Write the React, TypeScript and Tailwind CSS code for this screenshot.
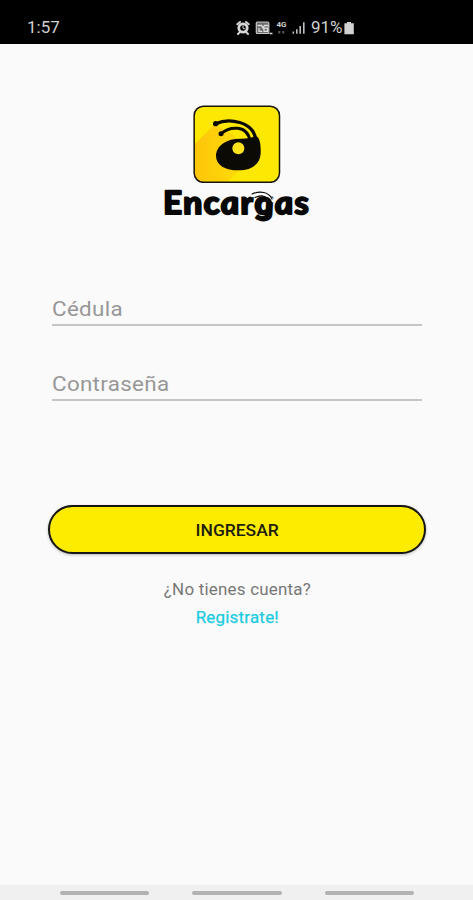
import React from 'react';

const StatusIcons = () => (
  <svg className="h-[18px] w-[70px]" viewBox="0 0 70 18" fill="none">
    {/* alarm */}
    <g stroke="#d6d6d6" strokeWidth="2" strokeLinecap="round">
      <circle cx="7" cy="9" r="4.2" strokeWidth="2.8" />
      <path d="M1.3 5.2 4 3M12.7 5.2 10 3M3.6 13.4 2 15M10.4 13.4l1.6 1.6" />
      <path d="M7 7v2.2l1.6.6" strokeWidth="1" />
    </g>
    {/* VoLTE */}
    <rect x="20.3" y="3" width="12.5" height="11.5" rx="1" fill="#6d6d6d" stroke="#c8c8c8" strokeWidth="1.2" />
    <path d="M21.5 6.5h4l1.5 2.5 1.5-2.5h4M23 9v3.3h3.2M28 9.2h3.4v3.2H28zM33.5 14.5h3" stroke="#dedede" strokeWidth="1.3" />
    {/* data arrows */}
    <path d="M43.3 12v2.6M47.3 12v2.6" stroke="#5a5a5a" strokeWidth="2" />
    {/* signal */}
    <path d="M57.3 12.5v2.2M60.8 10.3v4.4M64.2 7v7.7M67.8 3.2v11.5" stroke="#bdbdbd" strokeWidth="1.6" />
  </svg>
);

const StatusBar = () => (
  <header className="flex h-[43.5px] shrink-0 items-center bg-black pt-[12px] pl-[27px] font-['Roboto',sans-serif] text-[#d0d0d0]">
    <span className="w-[208.5px]">
      <span className="inline-block origin-left scale-x-[1.06] text-[16px] leading-none">1:57</span>
    </span>
    <div className="relative">
      <StatusIcons />
      <span className="absolute top-[2px] left-[41px] text-[8px] leading-none font-bold">4G</span>
    </div>
    <span className="ml-[5px] w-[33.5px] text-[16px] leading-none">
      <span className="inline-block origin-left scale-x-[1.06]">91%</span>
    </span>
    <svg className="h-[14px] w-[10px]" viewBox="0 0 10 14" fill="#d2d2d2">
      <path d="M3 1h4v1.2h2.8v11H.4v-11H3z" />
    </svg>
  </header>
);

const Logo = () => (
  <svg className="h-[78px] w-[88px]" viewBox="25 22 264 234" fill="none">
    <defs>
      <clipPath id="tile">
        <rect x="28" y="25" width="257" height="229" rx="28" />
      </clipPath>
      <linearGradient id="shade" x1="0" y1="0" x2="1" y2="0">
        <stop offset="0" stopColor="#fdc50c" />
        <stop offset="1" stopColor="#fddc06" />
      </linearGradient>
    </defs>
    <rect x="28" y="25" width="257" height="229" rx="28" fill="#fde803" />
    <path clipPath="url(#tile)" d="M90 80 28 142v114h96l48-42-20-100z" fill="url(#shade)" />
    <rect x="28.5" y="25.5" width="256" height="228.5" rx="28" stroke="#171508" strokeWidth="4.5" />
    {/* antennae */}
    <g stroke="#0b0a04" strokeLinecap="round">
      <path d="M93 78C130 62 208 68 213 128" strokeWidth="10" />
      <path d="M110 108c24-22 78-28 86 22" strokeWidth="9" />
    </g>
    <circle cx="93" cy="78" r="8" fill="#0b0a04" />
    <circle cx="109" cy="108" r="7.5" fill="#0b0a04" />
    {/* head */}
    <path d="M94 170c4-30 36-48 74-47 20 0 36-3 46-8 12 5 15 26 14 53-2 32-28 50-66 50-42 0-70-16-68-48z" fill="#0b0a04" />
    <circle cx="161" cy="152" r="18" fill="#fde31c" />
  </svg>
);

const Wordmark = () => (
  <svg className="h-[40px] w-[152px] overflow-visible" viewBox="0 0 152 40">
    {/* the italic cut has the single-storey a, the skew stands it upright again */}
    <g transform="translate(3.5 27) skewX(8)">
      <text
        textLength="147"
        lengthAdjust="spacingAndGlyphs"
        className="fill-[#080808] stroke-[#080808] font-['Lato',sans-serif] text-[32px] font-bold tracking-[1.2px] italic"
        strokeWidth="2"
        strokeLinejoin="round"
      >
        Encar<tspan className="font-['Roboto',sans-serif] text-[31px]">g</tspan>as
      </text>
    </g>
    <g fill="none" strokeLinecap="round">
      <path d="M91 9c9-4 19-1 21 5" stroke="#fafafa" strokeWidth="2.6" />
      <path d="M91 7c8-3.5 17-2 20 5M94 10.5c6-3 11-1.5 13 2" stroke="#080808" strokeWidth="1.1" />
    </g>
  </svg>
);

const Field = ({ label }: { label: string }) => (
  <div className="flex h-[32px] w-[370px] flex-col justify-between border-b-2 border-[#c5c5c5]">
    <span className="origin-left scale-x-[1.065] self-start text-[21px] leading-[31px] tracking-[0.3px] text-[#979797]">{label}</span>
  </div>
);

const NavBar = () => (
  <nav className="flex h-[15px] shrink-0 justify-center gap-[43px] bg-[#f0f0f0] pt-[6px] pl-px">
    {[0, 1, 2].map((i) => (
      <span key={i} className="h-[4px] w-[89.5px] rounded-full bg-[#b2b2b2]" />
    ))}
  </nav>
);

export default function App() {
  return (
    <div className="flex h-[900px] w-[473px] flex-col overflow-hidden bg-[#fafafa] font-['Roboto',sans-serif]">
      <StatusBar />
      <main className="flex flex-1 flex-col items-center pt-[61.5px]">
        <Logo />
        <div className="mt-[3.5px]">
          <Wordmark />
        </div>
        <div className="mt-[67.5px] flex flex-col gap-[43px]">
          <Field label="Cédula" />
          <Field label="Contraseña" />
        </div>
        <button className="mt-[104px] h-[49px] w-[378px] rounded-full border-[2.5px] border-[#161616] bg-[#feec00] pt-[2px] pl-[2px] text-[#202010] shadow-[0_1px_3px_rgba(0,0,0,0.25)]">
          <span className="inline-block scale-x-[1.09] text-[16px] font-medium">INGRESAR</span>
        </button>
        <p className="mt-[26px] ml-px scale-x-[1.06] text-[16px] leading-[20px] tracking-[0.2px] text-[#777777]">¿No tienes cuenta?</p>
        <a className="mt-[8px] ml-px scale-x-[1.06] text-[16px] leading-[20px] tracking-[0.2px] text-[#20cbe0] [-webkit-text-stroke:0.25px_#20cbe0]">Registrate!</a>
      </main>
      <NavBar />
    </div>
  );
}
